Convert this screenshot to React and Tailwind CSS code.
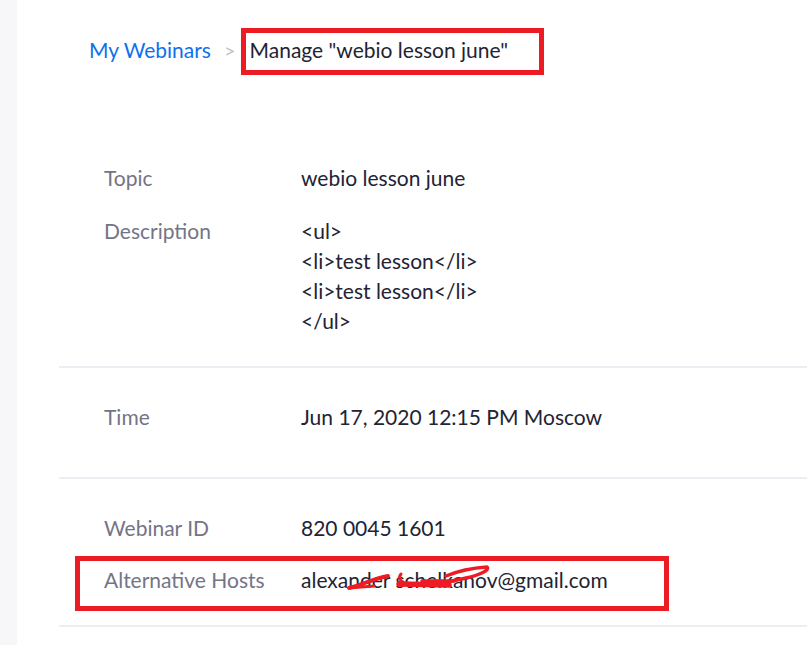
import React from 'react';

function Row({ label, children, className = '' }) {
    return (
        <div className={`flex leading-[30px] ${className}`}>
            <div className="w-[197px] shrink-0 text-[#747487]">{label}</div>
            <div className="text-[#232333]">{children}</div>
        </div>
    );
}

export default function App() {
    return (
        <div className="relative h-[645px] w-[807px] overflow-hidden bg-white font-['Lato',sans-serif] text-[21px]">
            <div className="flex h-full">
                <div className="w-[17px] shrink-0 bg-[#f7f7fa]"></div>
                <div className="flex-1 pl-[42px]">
                    <div className="flex items-center pl-[30px] pt-[35px] leading-[30px]">
                        <span className="text-[#0e71eb]">My Webinars</span>
                        <span className="ml-[13px] mr-[14px] text-[20px] text-[#c4c4c4]">&gt;</span>
                        <span className="text-[#232333]">Manage "webio lesson june"</span>
                    </div>

                    <div className="border-b-2 border-[#ededf4] pb-[30px] pl-[45px] pt-[98px]">
                        <Row label="Topic" className="mb-[23px]">webio lesson june</Row>
                        <Row label="Description">
                            <div>&lt;ul&gt;</div>
                            <div>&lt;li&gt;test lesson&lt;/li&gt;</div>
                            <div>&lt;li&gt;test lesson&lt;/li&gt;</div>
                            <div>&lt;/ul&gt;</div>
                        </Row>
                    </div>

                    <div className="border-b-2 border-[#ededf4] pb-[45px] pl-[45px] pt-[34px]">
                        <Row label="Time">Jun 17, 2020 12:15 PM Moscow</Row>
                    </div>

                    <div className="border-b-2 border-[#ededf4] pb-[30px] pl-[45px] pt-[34px]">
                        <Row label="Webinar ID" className="mb-[22px]">820 0045 1601</Row>
                        <Row label="Alternative Hosts">alexander schelkanov@gmail.com</Row>
                    </div>
                </div>
            </div>

            {/* annotations drawn over the screenshot */}
            <div className="absolute left-[241px] top-[28px] h-[47px] w-[303px] border-[5px] border-[#ed1c24]"></div>
            <div className="absolute left-[75px] top-[556px] h-[55px] w-[594px] border-[5px] border-[#ed1c24]"></div>
            <svg className="absolute left-[330px] top-[555px]" width="180" height="45" viewBox="0 0 180 45" fill="none" stroke="#ed1c24" strokeLinecap="round" strokeLinejoin="round">
                <path d="M19 33 C30 31 42 24 58 21" strokeWidth="4" />
                <path d="M19 33 L44 31" strokeWidth="3" />
                <path d="M71 19 C68 23 70 25 73 27" strokeWidth="3" />
                <path d="M69 29 L119 30" strokeWidth="5.5" />
                <path d="M92 26 L124 26" strokeWidth="3.5" />
                <path d="M116 21 C128 16 142 13 157 12 C160 15 150 20 136 23 C128 25 122 26 116 27" strokeWidth="3.5" />
            </svg>
        </div>
    );
}
